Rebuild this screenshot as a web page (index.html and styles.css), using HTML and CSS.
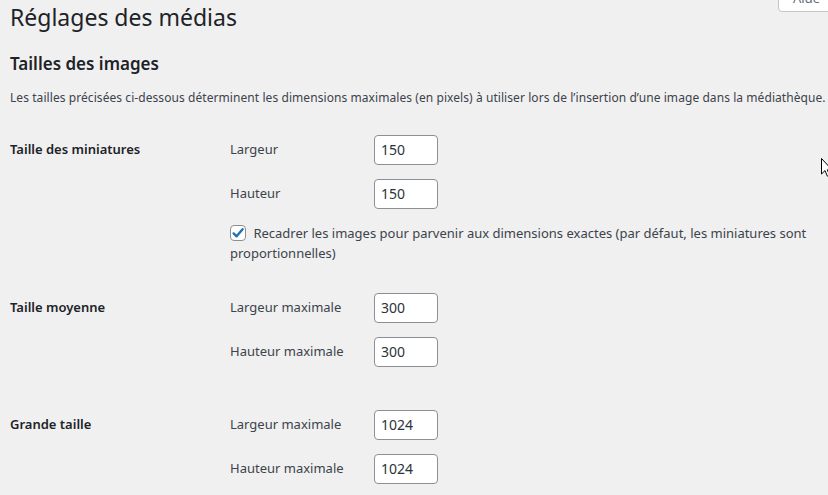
FILE: index.html
```html
<!DOCTYPE html>
<html lang="fr">
<head>
    <meta charset="UTF-8">
    <title>Réglages des médias</title>
    <link rel="stylesheet" href="styles.css">
</head>
<body>
    <div class="help-tab">Aide</div>
    <div class="wrap">
        <h1>Réglages des médias</h1>
        <h2>Tailles des images</h2>
        <p class="intro">Les tailles précisées ci-dessous déterminent les dimensions maximales (en pixels) à utiliser lors de l’insertion d’une image dans la médiathèque.</p>

        <div class="form-table">
            <div class="row">
                <div class="th">Taille des miniatures</div>
                <div class="td">
                    <div class="field">
                        <label for="thumbnail_size_w">Largeur</label>
                        <input type="text" id="thumbnail_size_w" class="small-text" value="150">
                    </div>
                    <div class="field">
                        <label for="thumbnail_size_h">Hauteur</label>
                        <input type="text" id="thumbnail_size_h" class="small-text" value="150">
                    </div>
                    <div class="crop">
                        <span class="checkbox">
                            <svg width="16" height="16" viewBox="0 0 16 16"><path d="M3.6 8.4 L6.6 11.3 L12.6 4.2" fill="none" stroke="#2271b1" stroke-width="2.4" stroke-linecap="round" stroke-linejoin="round"/></svg>
                        </span>
                        Recadrer les images pour parvenir aux dimensions exactes (par défaut, les miniatures sont proportionnelles)
                    </div>
                </div>
            </div>
            <div class="row">
                <div class="th">Taille moyenne</div>
                <div class="td">
                    <div class="field">
                        <label for="medium_size_w">Largeur maximale</label>
                        <input type="text" id="medium_size_w" class="small-text" value="300">
                    </div>
                    <div class="field">
                        <label for="medium_size_h">Hauteur maximale</label>
                        <input type="text" id="medium_size_h" class="small-text" value="300">
                    </div>
                </div>
            </div>
            <div class="row">
                <div class="th">Grande taille</div>
                <div class="td">
                    <div class="field">
                        <label for="large_size_w">Largeur maximale</label>
                        <input type="text" id="large_size_w" class="small-text" value="1024">
                    </div>
                    <div class="field">
                        <label for="large_size_h">Hauteur maximale</label>
                        <input type="text" id="large_size_h" class="small-text" value="1024">
                    </div>
                </div>
            </div>
        </div>
    </div>
    <svg class="cursor" width="12" height="20" viewBox="0 0 12 20"><path d="M0.5 0.5 L0.5 16 L4 12.6 L6.4 18.2 L8.6 17.3 L6.3 11.8 L11 11.8 Z" fill="#fff" stroke="#000" stroke-width="1"/></svg>
</body>
</html>
```

FILE: styles.css
```css
html, body {
    margin: 0;
    padding: 0;
}
body {
    background-color: #f0f0f1;
    color: #3c434a;
    font-family: "Noto Sans", "Open Sans", sans-serif;
    font-size: 13px;
    line-height: 1.4;
    position: relative;
    height: 495px;
    overflow: hidden;
}
.wrap {
    padding-left: 10px;
}
h1 {
    margin: 0;
    padding-top: 3px;
    font-size: 23px;
    font-weight: 400;
    line-height: 1.3;
    color: #1d2327;
}
h2 {
    margin: 20px 0 0;
    font-size: 17px;
    font-weight: 600;
    line-height: 1.3;
    color: #1d2327;
}
.intro {
    margin: 15px 0 0;
    font-size: 12px;
    letter-spacing: 0.07px;
    white-space: nowrap;
}
.form-table {
    margin-top: 13px;
}
.row {
    display: flex;
}
.th {
    width: 210px;
    flex: none;
    padding: 20px 0 0;
    font-size: 13px;
    font-weight: 600;
    color: #1d2327;
}
.td {
    padding: 15px 10px 15px;
}
.row:nth-child(2) .td {
    padding-bottom: 14px;
}
.field {
    display: flex;
    align-items: center;
    margin-bottom: 14px;
}
.field label {
    width: 144px;
    font-size: 13px;
    margin-top: -1px;
}
.small-text {
    width: 64px;
    height: 30px;
    box-sizing: border-box;
    border: 1px solid #8c8f94;
    border-radius: 4px;
    background-color: #fff;
    padding: 0 6px;
    font-family: inherit;
    font-size: 14px;
    color: #2c3338;
    margin: 0;
}
.crop {
    margin-top: 2px;
    line-height: 20px;
    width: 578px;
}
.checkbox {
    display: inline-block;
    width: 16px;
    height: 16px;
    box-sizing: border-box;
    border: 1px solid #8c8f94;
    border-radius: 4px;
    background-color: #fff;
    vertical-align: -3px;
    margin-right: 4px;
    position: relative;
}
.checkbox svg {
    position: absolute;
    left: -1px;
    top: -1px;
}
.help-tab {
    position: absolute;
    top: -12px;
    left: 778px;
    width: 70px;
    height: 24px;
    box-sizing: border-box;
    border: 1px solid #c3c4c7;
    border-radius: 0 0 4px 4px;
    background-color: #fff;
    color: #646970;
    font-size: 13px;
    line-height: 13px;
    padding: 3px 0 0 14px;
}
.cursor {
    position: absolute;
    left: 821px;
    top: 158px;
}
```
